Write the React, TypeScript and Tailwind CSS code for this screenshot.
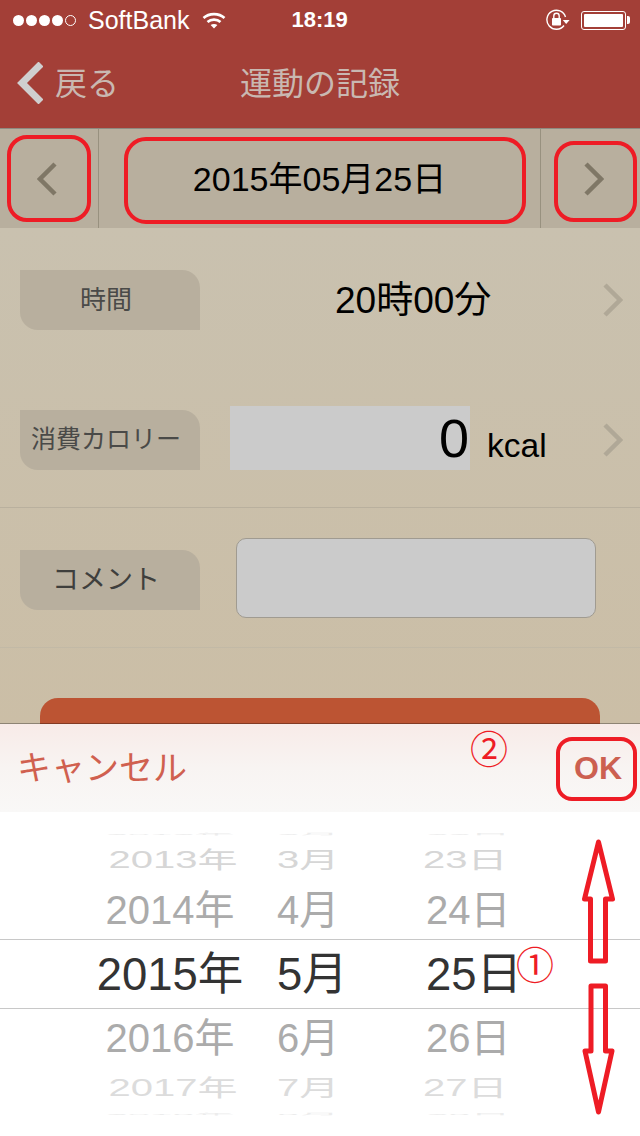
import { Fragment } from "react";

const JP = "font-['Liberation_Sans','Noto_Sans_CJK_JP',sans-serif]";

type Row = { y: string; m: string; d: string; box: string; text: string; yShift?: string; dShift?: string };

const pickerRows: Row[] = [
  { y: "2012年", m: "2月", d: "22日", box: "h-[10px] mt-[17px]", text: "text-[40px] text-[#ececec] scale-y-[0.06]" },
  { y: "2013年", m: "3月", d: "23日", box: "h-[42px]", text: "text-[40px] text-[#d6d6d6] scale-y-[0.58]", yShift: "translate-x-[3px]", dShift: "-translate-x-[3px]" },
  { y: "2014年", m: "4月", d: "24日", box: "h-[58px]", text: "text-[40px] text-[#ababab]" },
];
const pickerRowsBelow: Row[] = [
  { y: "2016年", m: "6月", d: "26日", box: "h-[58px]", text: "text-[40px] text-[#ababab]" },
  { y: "2017年", m: "7月", d: "27日", box: "h-[42px]", text: "text-[40px] text-[#dcdcdc] scale-y-[0.58]", yShift: "translate-x-[3px]", dShift: "-translate-x-[3px]" },
  { y: "2018年", m: "8月", d: "28日", box: "h-[10px]", text: "text-[40px] text-[#ececec] scale-y-[0.06]" },
];

function Chevron({ className, left }: { className: string; left?: boolean }) {
  return (
    <svg viewBox="0 0 20 34" className={className} fill="none" stroke="currentColor" strokeWidth="4.5">
      <path d={left ? "M18 2 L3 17 L18 32" : "M2 2 L17 17 L2 32"} />
    </svg>
  );
}

function PickerRow({ r }: { r: Row }) {
  return (
    <div className={`flex items-center overflow-hidden ${r.box}`}>
      <span className={`w-[277px] shrink-0 pl-[63px] text-center leading-none ${r.text} ${r.yShift ?? ""}`}>{r.y}</span>
      <span className={`w-[149px] shrink-0 leading-none origin-center ${r.text}`}>{r.m}</span>
      <span className={`leading-none ${r.text} ${r.dShift ?? ""}`}>{r.d}</span>
    </div>
  );
}

export default function App() {
  return (
    <div className={`relative flex h-[1136px] w-[640px] flex-col overflow-hidden bg-white ${JP}`}>
      {/* Header */}
      <div className="h-[128px] bg-[#a33f37]">
        <div className="flex h-[40px] items-center text-white">
          <div className="ml-[13px] flex w-[71px] items-center gap-[2px]">
            {[0, 1, 2, 3].map((i) => (
              <span key={i} className="size-[11px] rounded-full bg-white" />
            ))}
            <span className="size-[11px] rounded-full border border-white" />
          </div>
          <span className="ml-[4px] text-[25px] leading-none">SoftBank</span>
          <svg viewBox="0 0 24 17" className="ml-[13px] h-[17px] w-[24px]" fill="none" stroke="white" strokeWidth="2.6">
            <path d="M1.5 6 C7 0.8 17 0.8 22.5 6" />
            <path d="M5.5 10 C9 6.8 15 6.8 18.5 10" />
            <path d="M12 16.5 L8.6 13 C10.5 11.6 13.5 11.6 15.4 13 Z" fill="white" stroke="none" />
          </svg>
          <span className="ml-[65px] text-[22px] font-semibold leading-none">18:19</span>
          <svg viewBox="0 0 24 24" className="ml-[198px] size-[24px]" fill="none" stroke="white" strokeWidth="1.4">
            <path d="M18 17.5 A9.5 9.5 0 1 1 19.5 9" />
            <path d="M16.8 12 L23.6 12 L20.2 16 Z" fill="white" stroke="none" />
            <rect x="6" y="10" width="9" height="7.5" rx="0.8" fill="white" stroke="none" />
            <path d="M7.8 10 V8 A2.7 2.7 0 0 1 13.2 8 V10" />
          </svg>
          <div className="ml-[11px] flex items-center">
            <div className="h-[19px] w-[45px] rounded-[3px] border border-white p-[2px]">
              <div className="h-full w-full rounded-[1px] bg-white" />
            </div>
            <div className="ml-[1px] h-[8px] w-[3px] rounded-r-[2px] bg-white" />
          </div>
        </div>
        <div className="flex h-[88px] items-center">
          <svg viewBox="0 0 26 42" className="ml-[17px] h-[42px] w-[26px] -translate-y-[1px]" fill="none" stroke="#cfcfcf" strokeWidth="7">
            <path d="M24 2 L5 21 L24 40" />
          </svg>
          <span className="ml-[12px] text-[32px] leading-none text-[#c9b8b1]">戻る</span>
          <span className="ml-[121px] text-[32px] leading-none text-[#c9b8b1]">運動の記録</span>
        </div>
      </div>

      {/* Date bar */}
      <div className="flex h-[100px] border-t border-[#8f8a80] bg-[#b8af9e]">
        <div className="flex w-[99px] items-center border-r border-[#98917f] pl-[37px]">
          <Chevron left className="h-[34px] w-[20px] text-[#7f7766]" />
        </div>
        <div className="flex flex-1 items-center justify-center text-[34px] leading-none text-black">2015年05月25日</div>
        <div className="flex w-[100px] items-center border-l border-[#98917f] pl-[43px]">
          <Chevron className="h-[34px] w-[20px] text-[#7f7766]" />
        </div>
      </div>

      {/* Form */}
      <div className="flex-1 overflow-hidden bg-gradient-to-b from-[#c9c1af] to-[#cbbea6]">
        <div className="flex h-[140px] items-start pl-[20px] pt-[42px]">
          <div className="flex h-[60px] w-[180px] items-center justify-center rounded-tr-[18px] rounded-bl-[18px] bg-[#b8af9e] pr-[8px] text-[26px] text-[#4a4a48]">時間</div>
          <div className="ml-[135px] flex h-[60px] w-[155px] items-center whitespace-nowrap text-[37px] leading-none text-black">20時00分</div>
          <Chevron className="ml-[113px] mt-[13px] h-[34px] w-[20px] text-[#b0a897]" />
        </div>
        <div className="flex h-[140px] items-start border-b border-[#b9b09e] pl-[20px] pt-[42px]">
          <div className="flex h-[60px] w-[180px] items-center justify-center rounded-tr-[18px] rounded-bl-[18px] bg-[#b8af9e] pr-[8px] text-[25px] text-[#4a4a48]">消費カロリー</div>
          <div className="ml-[30px] -mt-[4px] flex h-[64px] w-[240px] items-center justify-end bg-[#cbcbcb] pr-[1px] text-[54px] leading-none text-black">0</div>
          <span className="ml-[17px] mt-[19px] w-[60px] text-[33.5px] leading-none text-black">kcal</span>
          <Chevron className="ml-[56px] mt-[13px] h-[34px] w-[20px] text-[#b0a897]" />
        </div>
        <div className="flex h-[140px] items-start border-b border-[#c2b9a6] pl-[20px] pt-[42px]">
          <div className="flex h-[60px] w-[180px] items-center justify-center rounded-tr-[18px] rounded-bl-[18px] bg-[#b8af9e] pr-[8px] text-[27px] text-[#3f3f3d]">コメント</div>
          <div className="ml-[36px] -mt-[12px] h-[80px] w-[360px] rounded-[10px] border border-[#a09b91] bg-[#cbcbcb]" />
        </div>
        <div className="mx-[40px] mt-[50px] h-[80px] rounded-[18px] bg-[#bc5433]" />
      </div>

      {/* Date picker sheet */}
      <div className="-mt-[1px] flex h-[89px] items-center justify-between border-t border-black/30 bg-gradient-to-b from-[#f8ebe8] via-[#f8f4f2] to-[#f9f8f7] bg-clip-padding pl-[17px] pr-[18px]">
        <span className="text-[34px] leading-none text-[#d0604f]">キャンセル</span>
        <span className="text-[32px] font-bold leading-none text-[#cc6050]">OK</span>
      </div>
      <div className="h-[324px] flex-none bg-white">
        {pickerRows.map((r) => (
          <Fragment key={r.y}>
            <PickerRow r={r} />
          </Fragment>
        ))}
        <div className="flex h-[70px] items-center border-y border-[#c8c8c8] pt-[2px] text-[45.5px] leading-none text-[#333333]">
          <span className="w-[277px] shrink-0 pl-[63px] text-center">2015年</span>
          <span className="w-[149px] shrink-0">5月</span>
          <span>25日</span>
        </div>
        {pickerRowsBelow.map((r) => (
          <Fragment key={r.y}>
            <PickerRow r={r} />
          </Fragment>
        ))}
      </div>

      {/* Red annotations over the screenshot */}
      <div className="absolute left-[7px] top-[135px] h-[87px] w-[84px] rounded-[20px] border-4 border-[#ee1c25]" />
      <div className="absolute left-[124px] top-[137px] h-[87px] w-[402px] rounded-[22px] border-4 border-[#ee1c25]" />
      <div className="absolute left-[554px] top-[141px] h-[81px] w-[83px] rounded-[20px] border-4 border-[#ee1c25]" />
      <div className="absolute left-[556px] top-[737px] h-[64px] w-[81px] rounded-[16px] border-4 border-[#ee1c25]" />
      <span className="absolute left-[470px] top-[729px] text-[38px] leading-[42px] text-[#ee1c25]">②</span>
      <span className="absolute left-[516px] top-[945px] text-[38px] leading-[42px] text-[#ee1c25]">①</span>
      <svg viewBox="0 0 640 1136" className="pointer-events-none absolute left-0 top-0 h-[1136px] w-[640px]" fill="none" stroke="#ee1c25" strokeWidth="5" strokeLinejoin="round">
        <path d="M598.5 842 L612.5 899 H605.5 V961 H590.5 V899 H584.5 Z" />
        <path d="M598.5 1112 L612 1051 H605.5 V986 H591 V1051 H585 Z" />
      </svg>
    </div>
  );
}
